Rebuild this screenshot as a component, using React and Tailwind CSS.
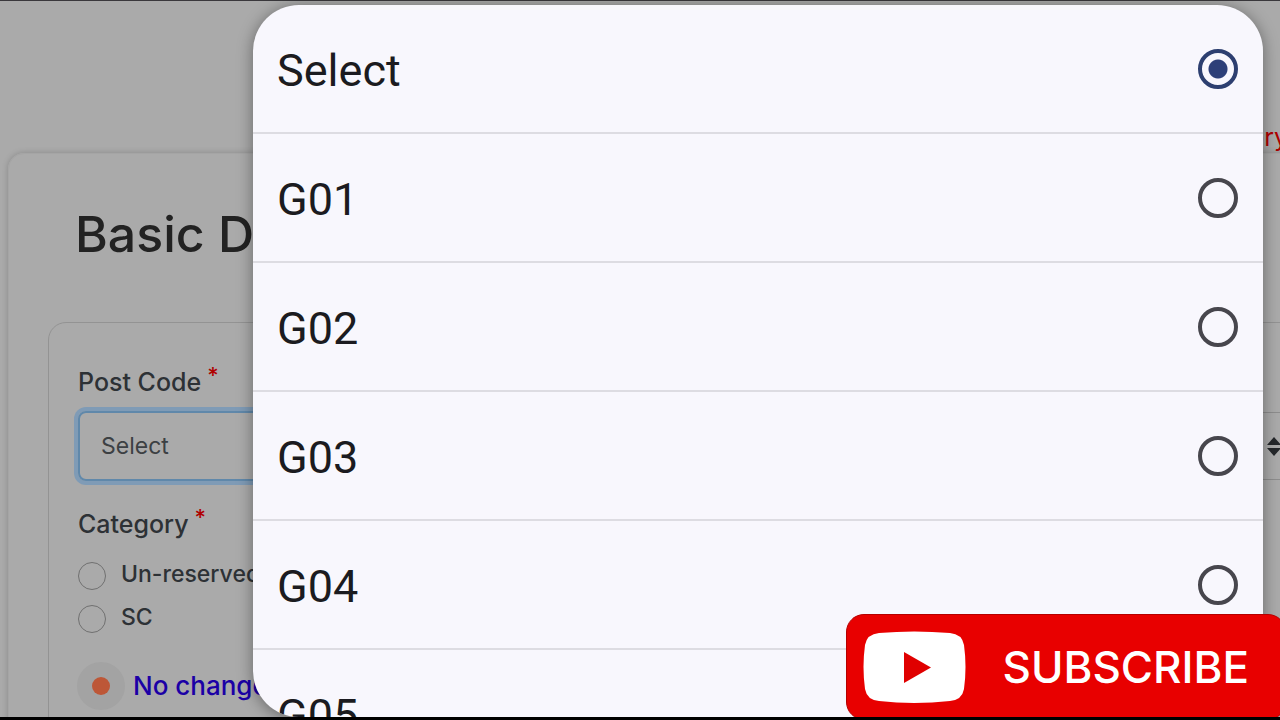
import { useState } from "react";

const postCodes = ["Select", "G01", "G02", "G03", "G04", "G05"];
const categories = ["Un-reserved", "SC"];

function Required() {
    return <sup className="relative -top-2 ml-1.5 text-[22px] leading-none text-[#b00000]">*</sup>;
}

function BasicDetails({ value, onChange }) {
    return (
        <main className="flex h-full flex-col overflow-hidden border-t border-[#3a383c] bg-[#aaaaaa] font-['Inter',sans-serif] font-medium text-[#2d3135]">
            <p className="-mr-2 flex h-[152px] shrink-0 items-end justify-end text-[25px] leading-8 font-normal text-[#b00000]">Mandatory</p>

            <section className="-mr-20 ml-2 grow rounded-tl-2xl border border-[#a5a5a5] pt-[46px] pl-[39px] shadow-[0_0_6px_rgba(0,0,0,0.2)]">
                <h1 className="pl-[27px] text-[50px] leading-[68px] text-[#222222]">Basic Details</h1>

                <form className="mt-[54px] h-[480px] rounded-tl-[18px] border border-[#939393] pt-[43px] pl-[29px]">
                    <div className="grid grid-cols-2 gap-8">
                        <div>
                            <label htmlFor="post-code" className="block text-[25px] leading-8">
                                Post Code<Required />
                            </label>
                            <select
                                id="post-code"
                                value={value}
                                onChange={(e) => onChange(e.target.value)}
                                className="mt-[13px] block h-[70px] w-full appearance-none rounded-lg border-2 border-[#6088aa] pl-[21px] text-[23px] font-normal text-[#3c4043] ring-4 ring-[#7f9bb6] outline-none"
                            >
                                {postCodes.map((code) => <option key={code}>{code}</option>)}
                            </select>
                        </div>
                        <div className="relative pt-[46px]">
                            <select aria-label="Discipline" className="block h-[68px] w-full appearance-none rounded-lg border border-[#8d8d8d] pl-6 text-[23px]" />
                            <svg className="absolute right-[76px] bottom-6 h-5 w-4" viewBox="0 0 16 20" aria-hidden="true">
                                <path d="M8 0 15 8H1zM8 19 1 11h14z" fill="#25282b" />
                            </svg>
                        </div>
                    </div>

                    <fieldset className="mt-[27px]">
                        <legend className="text-[25px] leading-8">
                            Category<Required />
                        </legend>
                        <div className="mt-[18px] flex flex-col gap-[11px]">
                            {categories.map((name) => (
                                <label key={name} className="flex items-center gap-[15px] text-[23px] leading-8">
                                    <input type="radio" name="category" className="mt-1 size-7 appearance-none rounded-full border border-[#707070]" />
                                    {name}
                                </label>
                            ))}
                        </div>
                    </fieldset>

                    <p className="mt-[29px] flex items-center gap-2 text-[26px] leading-8 text-[#1b00a6]">
                        <span className="-ml-px flex size-12 items-center justify-center rounded-full bg-[#a3a3a3]">
                            <span className="size-[18px] rounded-full bg-[#bd5737]" />
                        </span>
                        No change
                    </p>
                </form>
            </section>
        </main>
    );
}

function OptionPicker({ value, onChange }) {
    return (
        <div className="absolute inset-0 pt-[5px] pr-[17px] pl-[253px]">
            <div role="dialog" aria-label="Post Code" className="h-full overflow-hidden rounded-[46px] bg-[#f8f7fd] shadow-[0_2px_16px_rgba(0,0,0,0.4)]">
                {postCodes.map((code) => (
                    <label
                        key={code}
                        className="flex h-[129px] items-center justify-between border-b-2 border-[#dddce2] pr-[25px] pl-6 font-['Roboto',sans-serif] text-[45px] leading-[56px] text-[#1b1b20]"
                    >
                        <span className="pt-1">{code}</span>
                        <input
                            type="radio"
                            name="picker"
                            checked={value === code}
                            onChange={() => onChange(code)}
                            className="size-10 appearance-none rounded-full border-4 border-[#47464d] checked:border-[#2d3f70] checked:bg-[radial-gradient(circle,#2d3f78_0_9px,transparent_10px)]"
                        />
                    </label>
                ))}
            </div>
        </div>
    );
}

function SubscribeButton() {
    return (
        <button className="absolute -right-1.5 -bottom-[3px] flex h-[106px] items-center rounded-[18px] border border-[#b50000] bg-[#e80000] pr-9 pl-4 font-['Inter',sans-serif] text-[44px] font-medium text-white">
            <svg className="mr-9 h-[72px] w-[103px]" viewBox="0 0 103 72" aria-hidden="true">
                <path d="M16 2Q51-1 87 2Q99 3 101 14Q104 36 101 58Q99 69 87 70Q51 74 16 70Q4 69 2 58Q-1 36 2 14Q4 3 16 2Z" fill="#fff" />
                <path d="M41 21v31l27-15.500z" fill="#e00000" />
            </svg>
            SUBSCRIBE
        </button>
    );
}

export default function App() {
    const [postCode, setPostCode] = useState("Select");

    return (
        <div className="relative h-screen overflow-hidden border-b-[3px] border-black">
            <BasicDetails value={postCode} onChange={setPostCode} />
            <OptionPicker value={postCode} onChange={setPostCode} />
            <SubscribeButton />
        </div>
    );
}
